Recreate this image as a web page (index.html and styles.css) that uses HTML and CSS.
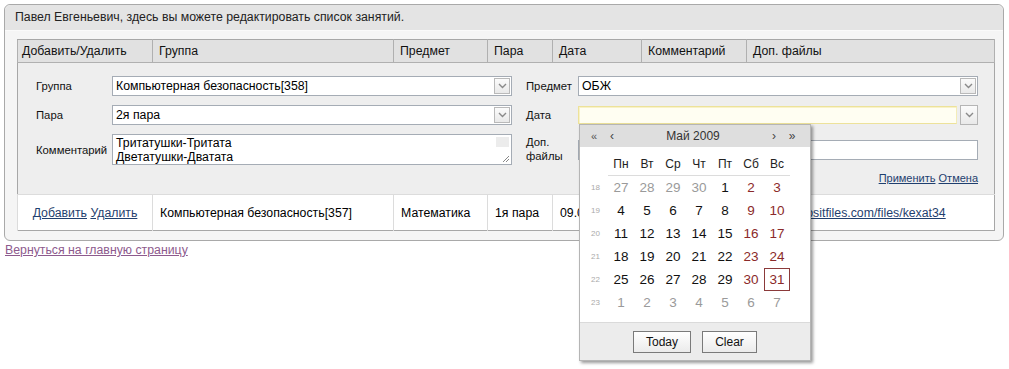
FILE: index.html
```html
<!DOCTYPE html>
<html lang="ru">
<head>
<meta charset="utf-8">
<title>Занятия</title>
<link rel="stylesheet" href="styles.css">
</head>
<body>
<div class="panel">
  <div class="panel-head">Павел Евгеньевич, здесь вы можете редактировать список занятий.</div>
  <div class="panel-body">
    <table class="grid">
      <colgroup>
        <col class="c1"><col class="c2"><col class="c3"><col class="c4"><col class="c5"><col class="c6"><col class="c7">
      </colgroup>
      <thead>
        <tr>
          <th>Добавить/Удалить</th><th>Группа</th><th>Предмет</th><th>Пара</th><th>Дата</th><th>Комментарий</th><th>Доп. файлы</th>
        </tr>
      </thead>
      <tbody>
        <tr class="edit-row">
          <td colspan="7">
            <div class="form">
              <div class="lbl l-left">Группа</div>
              <div class="select f-left"><span class="val">Компьютерная безопасность[358]</span><span class="btn"><svg width="9" height="6" viewBox="0 0 9 6"><path d="M1 1l3.5 3.5L8 1" fill="none" stroke="#8a8a8a" stroke-width="1.4"/></svg></span></div>
              <div class="lbl l-right">Предмет</div>
              <div class="select f-right"><span class="val">ОБЖ</span><span class="btn"><svg width="9" height="6" viewBox="0 0 9 6"><path d="M1 1l3.5 3.5L8 1" fill="none" stroke="#8a8a8a" stroke-width="1.4"/></svg></span></div>

              <div class="lbl l-left">Пара</div>
              <div class="select f-left"><span class="val">2я пара</span><span class="btn"><svg width="9" height="6" viewBox="0 0 9 6"><path d="M1 1l3.5 3.5L8 1" fill="none" stroke="#8a8a8a" stroke-width="1.4"/></svg></span></div>
              <div class="lbl l-right">Дата</div>
              <div class="datefield f-right">
                <div class="dateinput"></div>
                <span class="btn dbtn"><svg width="9" height="6" viewBox="0 0 9 6"><path d="M1 1l3.5 3.5L8 1" fill="none" stroke="#8a8a8a" stroke-width="1.4"/></svg></span>
                <div class="cal">
                  <div class="cal-head">
                    <span class="nav n1">«</span><span class="nav n2">‹</span>
                    <span class="month">Май 2009</span>
                    <span class="nav n3">›</span><span class="nav n4">»</span>
                  </div>
                  <div class="cal-grid">
                    <span class="wk"></span><span class="dn">Пн</span><span class="dn">Вт</span><span class="dn">Ср</span><span class="dn">Чт</span><span class="dn">Пт</span><span class="dn">Сб</span><span class="dn">Вс</span>

                    <span class="wk">18</span><span class="d o">27</span><span class="d o">28</span><span class="d o">29</span><span class="d o">30</span><span class="d">1</span><span class="d we">2</span><span class="d we">3</span>
                    <span class="wk">19</span><span class="d">4</span><span class="d">5</span><span class="d">6</span><span class="d">7</span><span class="d">8</span><span class="d we">9</span><span class="d we">10</span>
                    <span class="wk">20</span><span class="d">11</span><span class="d">12</span><span class="d">13</span><span class="d">14</span><span class="d">15</span><span class="d we">16</span><span class="d we">17</span>
                    <span class="wk">21</span><span class="d">18</span><span class="d">19</span><span class="d">20</span><span class="d">21</span><span class="d">22</span><span class="d we">23</span><span class="d we">24</span>
                    <span class="wk">22</span><span class="d">25</span><span class="d">26</span><span class="d">27</span><span class="d">28</span><span class="d">29</span><span class="d we">30</span><span class="d we sel">31</span>
                    <span class="wk">23</span><span class="d o">1</span><span class="d o">2</span><span class="d o">3</span><span class="d o">4</span><span class="d o">5</span><span class="d o">6</span><span class="d o">7</span>
                  </div>
                  <div class="cal-foot">
                    <button class="cbtn b-today">Today</button>
                    <button class="cbtn b-clear">Clear</button>
                  </div>
                </div>
              </div>

              <div class="lbl l-left">Комментарий</div>
              <div class="textarea f-left">
                <div class="ta-text">Тритатушки-Тритата<br>Дветатушки-Дватата</div>
                <span class="ta-scroll"></span>
                <svg class="ta-grip" width="9" height="9" viewBox="0 0 9 9"><path d="M8 2L2 8M8 5L5 8" stroke="#888" stroke-width="1"/></svg>
              </div>
              <div class="lbl l-right lbl-files">Доп.<br>файлы</div>
              <div class="input f-right"></div>

              <div class="actions"><a href="#">Применить</a> <a href="#">Отмена</a></div>
            </div>
          </td>
        </tr>
        <tr class="data-row">
          <td class="ops"><a href="#">Добавить</a> <a href="#">Удалить</a></td>
          <td>Компьютерная безопасность[357]</td>
          <td>Математика</td>
          <td>1я пара</td>
          <td>09.05.2009</td>
          <td>Тритатушки</td>
          <td class="files"><a href="#">http://depositfiles.com/files/kexat34</a></td>
        </tr>
      </tbody>
    </table>
  </div>
</div>
<a class="back" href="#">Вернуться на главную страницу</a>
</body>
</html>
```

FILE: styles.css
```css
html, body {
  margin: 0;
  padding: 0;
  background: #fff;
}
html { min-height: 100%; }
body {
  min-height: 100vh;
  box-sizing: border-box;
  padding: 4px 5px 4px 4px;
  font-family: "Liberation Sans", Arial, sans-serif;
  font-size: 12.3px;
  color: #000;
}
a { color: #1f3f6f; text-decoration: underline; }

.panel {
  width: 998px;
  border: 1px solid #a9a9a9;
  border-radius: 6px;
  background: #f5f5f5;
  margin-bottom: 2px;
}
.panel-head {
  height: 25px;
  line-height: 25px;
  padding-left: 10px;
  background: #e4e4e4;
  border-bottom: 1px solid #fafafa;
  border-radius: 6px 6px 0 0;
  color: #222;
}
.panel-body {
  padding: 8px 9px 9px 12px;
}

.grid {
  width: 977px;
  border-collapse: collapse;
  table-layout: fixed;
  border: 1px solid #a7a7a7;
}
.c1 { width: 135px; }
.c2 { width: 241px; }
.c3 { width: 94px; }
.c4 { width: 65px; }
.c5 { width: 89px; }
.c6 { width: 105px; }
.c7 { width: 248px; }

.grid th {
  height: 22px;
  padding: 0 0 0 6px;
  text-align: left;
  font-weight: normal;
  background: #e1e1e1;
  border: 1px solid #b0b0b0;
  border-top: 1px solid #a7a7a7;
  color: #111;
  white-space: nowrap;
}
.grid th:first-child { padding-left: 4px; }

.edit-row td {
  background: #eeeeee;
  padding: 13px 15px 0 18px;
  height: 118px;
  vertical-align: top;
  border-bottom: 1px solid #dcdcdc;
}

.form {
  display: grid;
  grid-template-columns: 76px 400px 14px 52px 400px;
  grid-template-rows: 20px 20px 31px auto;
  row-gap: 9px;
  align-items: center;
}
.form .lbl { color: #111; font-size: 11.3px; }
.l-left { grid-column: 1; }
.f-left { grid-column: 2; }
.l-right { grid-column: 4; }
.f-right { grid-column: 5; }

.select {
  position: relative;
  height: 20px;
  box-sizing: border-box;
  border: 1px solid #a5acb5;
  background: #fff;
  display: flex;
  align-items: center;
}
.select .val { padding-left: 3px; flex: 1; white-space: nowrap; }
.btn {
  width: 16px;
  height: 16px;
  box-sizing: border-box;
  border: 1px solid #b9b9b9;
  background: linear-gradient(#fbfbfb, #e9e9e9);
  display: flex;
  align-items: center;
  justify-content: center;
  margin-right: 1px;
}

.datefield {
  position: relative;
  height: 20px;
  display: flex;
  align-items: center;
  gap: 3px;
}
.dateinput {
  flex: 1;
  height: 18px;
  box-sizing: border-box;
  border: 1px solid #ede29a;
  border-right-color: #f3ecb8;
  background: #fffef2;
  box-shadow: inset 1px 1px 0 #f8f2c8;
}
.dbtn {
  width: 18px;
  height: 20px;
  margin: 0;
  border-color: #b5b5b5;
}

.textarea {
  position: relative;
  height: 31px;
  box-sizing: border-box;
  border: 1px solid #a5acb5;
  background: #fff;
  align-self: start;
}
.ta-text { padding: 1px 3px; line-height: 14px; color: #000; }
.ta-scroll {
  position: absolute;
  right: 2px;
  top: 2px;
  width: 13px;
  height: 10px;
  background: #ececec;
}
.ta-grip { position: absolute; right: 1px; bottom: 1px; }

.lbl-files {
  align-self: start;
  line-height: 14px;
  padding-top: 1px;
}
.input {
  height: 20px;
  box-sizing: border-box;
  border: 1px solid #a5acb5;
  background: #fff;
}
.actions {
  grid-column: 1 / -1;
  text-align: right;
  margin-top: -2px;
  font-size: 11px;
}
.actions a { color: #1f3f6f; }

.data-row td {
  height: 35px;
  padding: 0 0 0 7px;
  background: #fff;
  border-left: 1px solid #dcdcdc;
  white-space: nowrap;
  overflow: hidden;
}
.data-row td.ops { text-align: center; padding: 0; }
.data-row td.files { padding-left: 8px; }

.back {
  color: #8d5a8d;
  display: inline-block;
  margin-left: 1px;
}

/* Calendar popup */
.cal {
  position: absolute;
  left: 1px;
  top: 19px;
  width: 232px;
  background: #fff;
  border: 1px solid #b5b5b5;
  box-sizing: border-box;
  box-shadow: 2px 2px 3px rgba(0, 0, 0, 0.4);
  z-index: 5;
  color: #000;
}
.cal-head {
  height: 22px;
  background: #dedede;
  display: flex;
  align-items: center;
  padding: 0 8px 0 4px;
  font-size: 12px;
  color: #333;
}
.nav { width: 21px; text-align: center; color: #444; }
.n1 { width: 20px; font-size: 11px; color: #555; }
.n2 { width: 16px; }
.month { flex: 1; text-align: center; }
.n3 { width: 16px; }
.n4 { width: 20px; }

.cal-grid {
  display: grid;
  grid-template-columns: 25px repeat(7, 26px);
  grid-auto-rows: 23px;
  padding: 6px 0 0 3px;
  align-items: center;
  font-size: 13px;
  font-family: "Liberation Sans", Arial, sans-serif;
}
.cal-grid span {
  text-align: center;
  height: 23px;
  line-height: 23px;
  box-sizing: border-box;
}
.dn {
  font-size: 12px;
  color: #222;
  border-bottom: 1px solid #dcdcdc;
}
.cal-grid .wk {
  font-size: 8px;
  color: #aaa;
}
.d { color: #111; font-size: 13.5px; }
.d.we { color: #8b2a2a; }
.d.o { color: #9a9a9a; }
.cal-grid .sel {
  border: 1px solid #8b3a3a;
  line-height: 21px;
  height: 23px;
}

.cal-foot {
  margin-top: 8px;
  height: 37px;
  background: #ececec;
  border-top: 1px solid #dadada;
  display: flex;
  align-items: center;
  justify-content: center;
  gap: 11px;
}
.cbtn {
  height: 22px;
  border: 1px solid #7a7a7a;
  background: linear-gradient(#ffffff, #ebebeb);
  font-family: "Liberation Sans", Arial, sans-serif;
  font-size: 12px;
  color: #111;
  padding: 0;
}
.b-today { width: 58px; }
.b-clear { width: 55px; }
```
